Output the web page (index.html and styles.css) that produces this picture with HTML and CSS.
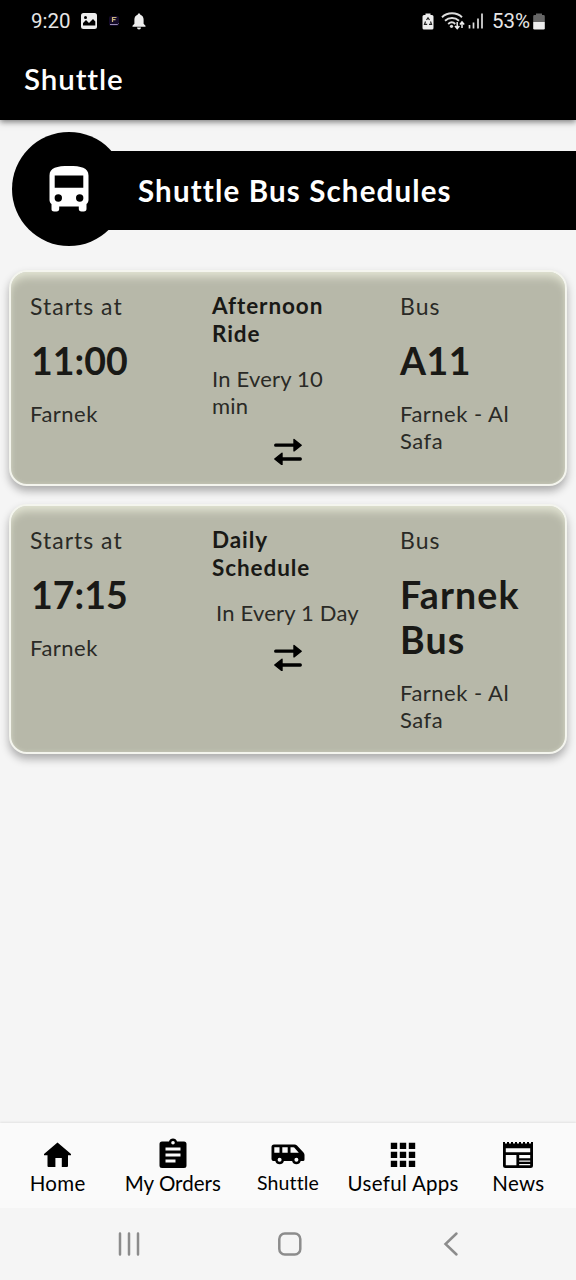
FILE: index.html
```html
<!DOCTYPE html>
<html lang="en">
<head>
<meta charset="utf-8">
<title>Shuttle</title>
<link rel="stylesheet" href="styles.css">
</head>
<body>
<svg class="defs" width="0" height="0">
  <symbol id="swap" viewBox="0 0 28 28">
    <path d="M1.700 8.200H20M7 22H26.300" fill="none" stroke="#000" stroke-width="3.300" stroke-linecap="round"/>
    <path d="M20 2.500v11.400l7.200-5.700zM8 16.300v11.400L.8 22z" fill="#000" stroke="#000" stroke-width="1.400" stroke-linejoin="round"/>
  </symbol>
</svg>
<div class="screen">
  <header class="top">
    <div class="status">
      <div class="status-left">
        <span class="clock">9:20</span>
        <svg class="s-photo" width="16" height="16" viewBox="0 0 16 16"><rect width="16" height="16" rx="2.5" fill="#eee"/><path d="M2 12.5V10l3-3 3 3 4-4 2.3 2.5v4z" fill="#000"/><circle cx="4.5" cy="4.5" r="1.5" fill="#000"/></svg>
        <svg class="s-app" width="12" height="12" viewBox="0 0 12 12"><rect x="1" y="1" width="10" height="10" rx="2" fill="#130a28"/><path d="M4.500 7V2.500h4M4.500 4.700h3" fill="none" stroke="#cbb679" stroke-width="1.200"/><path d="M2 9.500h7.500l1-1" fill="none" stroke="#9a8db5"/></svg>
        <svg class="s-bell" width="14" height="17" viewBox="0 0 14 17"><path d="M7 .5c.8 0 1.300.5 1.300 1.200 2.200.7 3.300 2.500 3.300 4.800v4.200l1.900 2v1H.5v-1l1.900-2V6.500c0-2.300 1.100-4.100 3.300-4.800C5.700 1 6.200.5 7 .5zM5 14.500h4a2 2 0 0 1-4 0z" fill="#eee"/></svg>
      </div>
      <div class="status-right">
        <svg class="s-eco" width="12" height="17" viewBox="0 0 12 17"><path d="M3.500 2V.5h5V2h1.500A1.500 1.500 0 0 1 11.500 3.500v11.500a1.500 1.500 0 0 1-1.500 1.500H2A1.500 1.500 0 0 1 .5 15V3.500A1.500 1.500 0 0 1 2 2z" fill="#eee"/><path d="M4.500 7 6 4.800 7.500 7M8.500 8.500l1 2.800H7M5.200 11.300H2.500l1-2.800" fill="none" stroke="#222" stroke-width="1.200"/></svg>
        <svg class="s-wifi" width="24" height="18" viewBox="0 0 24 18"><g fill="none" stroke="#ddd" stroke-width="1.900"><path d="M1 5.200C6.500 0 15.500 0 21 5.200M4 8.700c4-3.600 10-3.600 14 0M7.200 12c2.200-2 5-2 7 0"/></g><circle cx="10.500" cy="14.300" r="1.600" fill="#ddd"/><path d="M16.200 10v6M14 14l2.200 2.500L18.400 14M21 16v-5.500M18.900 12.500 21 10l2.200 2.500" fill="none" stroke="#eee" stroke-width="1.500"/></svg>
        <svg class="s-signal" width="16" height="16" viewBox="0 0 16 16"><path d="M1.500 12v3.500M5.500 9.500v6M10 5.500v10M14 .5v15" stroke="#ddd" stroke-width="1.700"/></svg>
        <span class="percent">53%</span>
        <svg class="s-battery" width="12" height="17" viewBox="0 0 12 17"><path d="M3 2V.5h6V2h1.500q1.300 0 1.300 1.300V9H.2V3.300Q.2 2 1.500 2z" fill="#666"/><path d="M.2 9h11.600v6.200q0 1.300-1.300 1.300h-9Q.2 16.500.2 15.200z" fill="#eee"/></svg>
      </div>
    </div>
    <h1 class="app-title">Shuttle</h1>
  </header>

  <main class="content">
    <section class="banner">
      <div class="banner-strip"><h2 class="banner-title">Shuttle Bus Schedules</h2></div>
      <div class="banner-badge">
        <svg width="40" height="46" viewBox="0 0 40 46"><path fill="#fff" fill-rule="evenodd" d="M20 0C8 0 .5 1.500.5 9.500V34c0 1.500.7 3 2 4v4.500A2.700 2.700 0 0 0 5.200 45.500H7.500a2.700 2.700 0 0 0 2.700-2.700V40.500h19.600v2.300a2.700 2.700 0 0 0 2.700 2.700h2.300a2.700 2.700 0 0 0 2.700-2.700V38c1.300-1 2-2.500 2-4V9.500C39.500 1.500 32 0 20 0zM5.700 9.500h28.600v12.300H5.700zM9.300 28.300a3.700 3.700 0 1 1 0 7.400 3.700 3.700 0 0 1 0-7.400zM30.700 28.300a3.700 3.700 0 1 1 0 7.400 3.700 3.700 0 0 1 0-7.400z"/></svg>
      </div>
    </section>

    <article class="card">
      <div class="col">
        <p class="label">Starts at</p>
        <p class="big time">11:00</p>
        <p class="note">Farnek</p>
      </div>
      <div class="col mid">
        <p class="ride">Afternoon<br>Ride</p>
        <p class="note every">In Every 10<br>min</p>
        <svg class="swap" width="28" height="28"><use href="#swap"/></svg>
      </div>
      <div class="col">
        <p class="label">Bus</p>
        <p class="big code">A11</p>
        <p class="note">Farnek - Al<br>Safa</p>
      </div>
    </article>

    <article class="card">
      <div class="col">
        <p class="label">Starts at</p>
        <p class="big time">17:15</p>
        <p class="note">Farnek</p>
      </div>
      <div class="col mid">
        <p class="ride">Daily<br>Schedule</p>
        <p class="note every single">In Every 1 Day</p>
        <svg class="swap" width="28" height="28"><use href="#swap"/></svg>
      </div>
      <div class="col">
        <p class="label">Bus</p>
        <p class="big">Farnek<br>Bus</p>
        <p class="note">Farnek - Al<br>Safa</p>
      </div>
    </article>
  </main>

  <nav class="tabs">
    <a class="tab"><svg width="30" height="32" viewBox="0 0 30 32"><path d="M14.500 4.500 28 16v1.200h-3V28q0 1-1 1h-5.200v-9h-6.400v9H5.500q-1 0-1-1V17.200H1V16z"/></svg><span>Home</span></a>
    <a class="tab"><svg width="30" height="32" viewBox="0 0 30 32"><path fill-rule="evenodd" d="M4 3.500h7C11.500 1.500 13 .5 15 .5s3.500 1 4 3h7q2.500 0 2.500 2.500v21.500q0 2.500-2.500 2.500H4q-2.500 0-2.500-2.500V6Q1.500 3.500 4 3.500zM15 3a1.800 1.800 0 1 0 0 3.600A1.800 1.800 0 0 0 15 3zM7.500 9.500v3h15v-3zM7.500 15.500v3h15v-3zM7.500 21.500v3h10v-3z"/></svg><span class="tight">My Orders</span></a>
    <a class="tab"><svg width="34" height="32" viewBox="0 0 34 32"><path fill-rule="evenodd" d="M3 6.500h20.500q1.500 0 2.500 1l6.500 7q1 1 1 2.500V21.500q0 1.500-1.500 1.500h-2.300a4.500 4.500 0 0 1-8.600 0h-8.200a4.500 4.500 0 0 1-8.600 0H2.500Q.5 23 .5 21v-12Q.5 6.500 3 6.500zM3.300 9.300v5.400h5.200V9.300zM11.300 9.300v5.400h5.400V9.300zM19.500 9.300v5.400h8.300l-4.600-5.100-1-.3zM8.600 19.800a2 2 0 1 0 0 4 2 2 0 0 0 0-4zM25.400 19.800a2 2 0 1 0 0 4 2 2 0 0 0 0-4z"/></svg><span class="current">Shuttle</span></a>
    <a class="tab"><svg width="30" height="32" viewBox="0 0 30 32"><path d="M2.800 4.700h6.400v6.400H2.800zM11.800 4.700h6.400v6.400h-6.400zM20.800 4.700h6.400v6.400h-6.400zM2.800 13.700h6.400v6.400H2.800zM11.800 13.700h6.400v6.400h-6.400zM20.800 13.700h6.400v6.400h-6.400zM2.800 22.700h6.400v6.400H2.800zM11.800 22.700h6.400v6.400h-6.400zM20.800 22.700h6.400v6.400h-6.400z"/></svg><span>Useful Apps</span></a>
    <a class="tab"><svg width="30" height="32" viewBox="0 0 30 32"><path fill-rule="evenodd" d="M0 4h2v1.500h2V4h2v1.500h2V4h2v1.500h2V4h2v1.500h2V4h2v1.500h2V4h2v1.500h2V4h2v1.500h2V4h2v23.500q0 2.500-2.500 2.500h-25Q0 30 0 27.500zM2.800 10.300v4h24.400v-4zM2.800 17v10.300h10.600V17zM16.200 17v3.200h11V17zM16.200 22.400v1.300h11v-1.300zM16.200 26v1.300h11V26z"/></svg><span>News</span></a>
  </nav>

  <footer class="system">
    <svg width="24" height="26" viewBox="0 0 24 26"><path d="M3 2.500v21M12 2.500v21M21 2.500v21"/></svg>
    <svg width="26" height="26" viewBox="0 0 26 26"><rect x="2.300" y="2.500" width="21" height="21" rx="5.500"/></svg>
    <svg width="24" height="26" viewBox="0 0 24 26"><path d="M17.500 2.500 6.500 13l11 10.500"/></svg>
  </footer>
</div>
</body>
</html>
```
FILE: styles.css
```css
* { box-sizing: border-box; }
body, h1, h2, p { margin: 0; }
body { background: #f5f5f5; color: #191916; font-family: Lato, "Open Sans", sans-serif; }
svg { display: block; flex: none; }
.defs { position: absolute; }
.screen { display: flex; flex-direction: column; width: 576px; height: 1280px; overflow: hidden; }

.top { height: 120px; background: #000; color: #fff; box-shadow: 0 2px 6px rgba(0, 0, 0, .5); flex: none; }
.status { display: flex; justify-content: space-between; height: 42px; padding: 0 31px; color: #e6e6e6; font: 20.5px/42px Roboto, sans-serif; }
.status-left, .status-right { display: flex; align-items: center; }
.s-photo { margin-left: 10px; }
.s-app { margin-left: 11px; }
.s-bell { margin-left: 12px; }
.s-wifi { margin-left: 7px; }
.s-signal { margin-left: 3px; }
.percent { margin-left: 8px; }
.s-battery { margin-left: 3px; }
.app-title { padding-left: 24px; font-size: 29.500px; font-weight: 600; line-height: 74px; letter-spacing: .9px; }

.content { flex: 1; }
.banner { position: relative; padding: 31px 0 40px 69px; }
.banner-strip { height: 79px; background: #000; padding-left: 69px; }
.banner-title { color: #fff; font-size: 29.500px; font-weight: 700; line-height: 79px; letter-spacing: 1.150px; }
.banner-badge { position: absolute; left: 12px; top: 12px; width: 114px; height: 114px; border-radius: 50%; background: #000; display: flex; align-items: center; justify-content: center; padding-bottom: 1px; }

.card { display: grid; grid-template-columns: 182px 188px 1fr; margin: 0 9px 18px 9px; padding: 20px 0 19px 19px; border: 2px solid #f4f5ee; border-radius: 18px; background: #b7b8a9; box-shadow: 0 5px 9px rgba(0, 0, 0, .3), inset 0 8px 9px -3px #e0e2d1, inset 0 0 4px #c9cbbb; }
.col { display: flex; flex-direction: column; gap: 18px; }
.label { font-size: 23px; line-height: 28px; letter-spacing: 1px; color: #2a2a26; }
.big { font-size: 37.500px; font-weight: 700; line-height: 45px; letter-spacing: 1.100px; }
.time, .code { letter-spacing: 0; }
.time { padding-left: 1px; }
.code { letter-spacing: .5px; }
.note { font-size: 22px; line-height: 26.600px; letter-spacing: .5px; color: #2a2a26; }
.ride { font-size: 22.500px; font-weight: 700; line-height: 28px; letter-spacing: .9px; }
.every { letter-spacing: .2px; }
.single { padding-left: 4px; margin-bottom: -2px; }
.swap { margin: 0 0 0 61.500px; }

.tabs { display: grid; grid-template-columns: repeat(5, 1fr); height: 85px; padding-top: 15px; background: #fafafa; box-shadow: 0 -1px 2px rgba(0, 0, 0, .08); }
.tab { display: flex; flex-direction: column; align-items: center; color: #000; font-size: 20.500px; font-weight: 400; line-height: 26px; letter-spacing: .3px; white-space: nowrap; }
.tight { letter-spacing: 0; }
.current { font-size: 19.500px; letter-spacing: .1px; }

.system { display: grid; grid-template-columns: repeat(3, 161px); justify-content: center; align-items: center; justify-items: center; height: 72px; padding-left: 4px; background: #f5f5f5; }
.system svg { fill: none; stroke: #8c8c8c; stroke-width: 2.500px; stroke-linecap: round; }
```
